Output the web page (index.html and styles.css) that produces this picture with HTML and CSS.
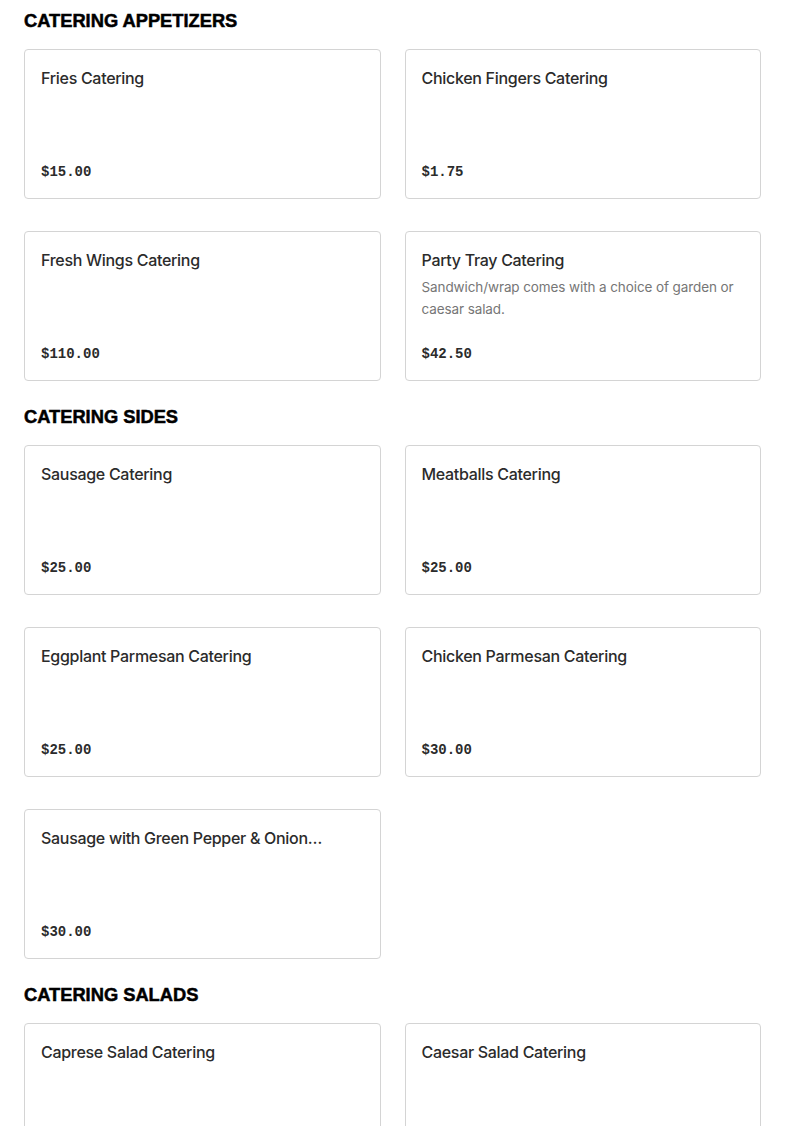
FILE: index.html
```html
<!DOCTYPE html>
<html>
<head>
<meta charset="utf-8">
<link rel="stylesheet" href="styles.css">
</head>
<body>
<main class="menu">
  <section class="section">
    <h2 class="section-title">CATERING APPETIZERS</h2>
    <div class="grid">
      <div class="card"><div class="card-title">Fries Catering</div><div class="card-price">$15.00</div></div>
      <div class="card"><div class="card-title">Chicken Fingers Catering</div><div class="card-price">$1.75</div></div>
      <div class="card"><div class="card-title">Fresh Wings Catering</div><div class="card-price">$110.00</div></div>
      <div class="card"><div class="card-title">Party Tray Catering</div><div class="card-desc">Sandwich/wrap comes with a choice of garden or caesar salad.</div><div class="card-price">$42.50</div></div>
    </div>
  </section>
  <section class="section">
    <h2 class="section-title">CATERING SIDES</h2>
    <div class="grid">
      <div class="card"><div class="card-title">Sausage Catering</div><div class="card-price">$25.00</div></div>
      <div class="card"><div class="card-title">Meatballs Catering</div><div class="card-price">$25.00</div></div>
      <div class="card"><div class="card-title">Eggplant Parmesan Catering</div><div class="card-price">$25.00</div></div>
      <div class="card"><div class="card-title">Chicken Parmesan Catering</div><div class="card-price">$30.00</div></div>
      <div class="card"><div class="card-title">Sausage with Green Pepper &amp; Onion…</div><div class="card-price">$30.00</div></div>
    </div>
  </section>
  <section class="section">
    <h2 class="section-title">CATERING SALADS</h2>
    <div class="grid">
      <div class="card"><div class="card-title">Caprese Salad Catering</div><div class="card-price">$30.00</div></div>
      <div class="card"><div class="card-title">Caesar Salad Catering</div><div class="card-price">$30.00</div></div>
    </div>
  </section>
</main>
</body>
</html>
```

FILE: styles.css
```css
* { box-sizing: border-box; }
html, body { margin: 0; padding: 0; background: #fff; }
body { font-family: "Inter", "Liberation Sans", sans-serif; color: #2b2b2b; }
.menu {
  padding: 8px 24px 40px;
  display: flex;
  flex-direction: column;
  gap: 23px;
}
.section-title {
  margin: 0 0 16px;
  font-family: "Liberation Sans", Arial, sans-serif;
  font-weight: 900;
  font-size: 18.3px;
  line-height: 25px;
  color: #000;
  letter-spacing: 0;
  -webkit-text-stroke: 0.5px #000;
}
.grid {
  display: grid;
  grid-template-columns: 1fr 1fr;
  column-gap: 24px;
  row-gap: 32px;
}
.card {
  border: 1px solid #d4d4d4;
  border-radius: 4px;
  min-height: 150px;
  padding: 16px 16px 14px;
  display: flex;
  flex-direction: column;
}
.card-title {
  font-size: 16px;
  font-weight: 500;
  line-height: 24px;
  color: #2b2b2b;
  letter-spacing: -0.3px;
}
.card-desc {
  margin-top: 4px;
  font-size: 13.5px;
  line-height: 22px;
  color: #767676;
  letter-spacing: -0.1px;
}
.card-price {
  margin-top: auto;
  font-family: "Liberation Mono", "DejaVu Sans Mono", monospace;
  font-weight: 700;
  font-size: 14px;
  line-height: 24px;
  color: #2b2b2b;
}
```
